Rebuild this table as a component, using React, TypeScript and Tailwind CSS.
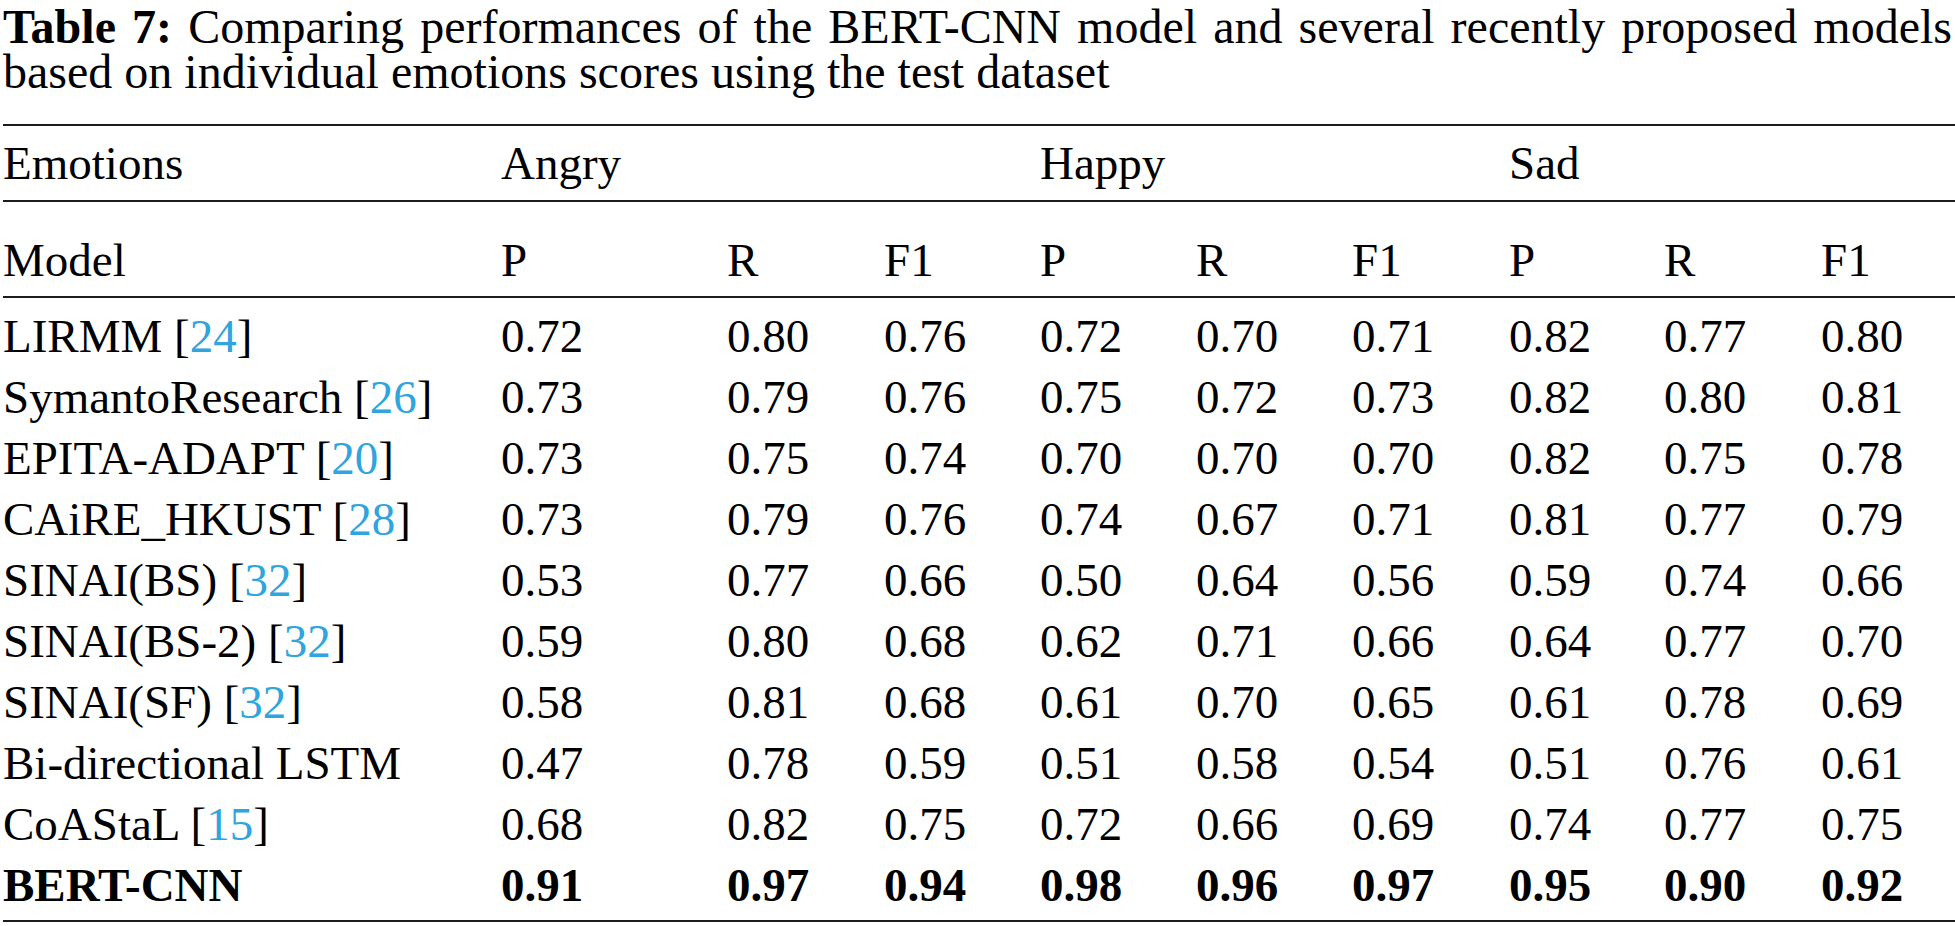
const cols =
  'grid grid-cols-[498px_226px_157px_156px_156px_156px_157px_155px_157px_1fr]';

interface ModelRow {
  name: string;
  ref?: string;
  scores: string[];
  bold?: boolean;
}

const rows: ModelRow[] = [
  { name: 'LIRMM', ref: '24', scores: ['0.72', '0.80', '0.76', '0.72', '0.70', '0.71', '0.82', '0.77', '0.80'] },
  { name: 'SymantoResearch', ref: '26', scores: ['0.73', '0.79', '0.76', '0.75', '0.72', '0.73', '0.82', '0.80', '0.81'] },
  { name: 'EPITA-ADAPT', ref: '20', scores: ['0.73', '0.75', '0.74', '0.70', '0.70', '0.70', '0.82', '0.75', '0.78'] },
  { name: 'CAiRE_HKUST', ref: '28', scores: ['0.73', '0.79', '0.76', '0.74', '0.67', '0.71', '0.81', '0.77', '0.79'] },
  { name: 'SINAI(BS)', ref: '32', scores: ['0.53', '0.77', '0.66', '0.50', '0.64', '0.56', '0.59', '0.74', '0.66'] },
  { name: 'SINAI(BS-2)', ref: '32', scores: ['0.59', '0.80', '0.68', '0.62', '0.71', '0.66', '0.64', '0.77', '0.70'] },
  { name: 'SINAI(SF)', ref: '32', scores: ['0.58', '0.81', '0.68', '0.61', '0.70', '0.65', '0.61', '0.78', '0.69'] },
  { name: 'Bi-directional LSTM', scores: ['0.47', '0.78', '0.59', '0.51', '0.58', '0.54', '0.51', '0.76', '0.61'] },
  { name: 'CoAStaL', ref: '15', scores: ['0.68', '0.82', '0.75', '0.72', '0.66', '0.69', '0.74', '0.77', '0.75'] },
  { name: 'BERT-CNN', bold: true, scores: ['0.91', '0.97', '0.94', '0.98', '0.96', '0.97', '0.95', '0.90', '0.92'] },
];

function Rule() {
  return <div className="h-[2px] bg-[#1c1c1c]" />;
}

export default function App() {
  return (
    <div className="w-[1955px] h-[926px] bg-white text-black pl-[3px] font-['Liberation_Serif',serif]">
      {/* Caption */}
      <div className="pt-[4px] pr-[3px] text-[48px] leading-[45px]">
        <div className="text-justify [text-align-last:justify] whitespace-nowrap">
          <span className="font-bold">Table 7:</span> Comparing performances of the BERT-CNN model and several recently proposed models
        </div>
        <div>based on individual emotions scores using the test dataset</div>
      </div>

      <div className="mt-[30px] text-[47px]">
        <Rule />
        <div className={`${cols} h-[74px] leading-[74px]`}>
          <div>Emotions</div>
          <div className="col-span-3">Angry</div>
          <div className="col-span-3">Happy</div>
          <div className="col-span-3">Sad</div>
        </div>
        <Rule />
        <div className={`${cols} pt-[35px] pb-[13px] leading-[46px]`}>
          <div>Model</div>
          {['P', 'R', 'F1', 'P', 'R', 'F1', 'P', 'R', 'F1'].map((h, i) => (
            <div key={i}>{h}</div>
          ))}
        </div>
        <Rule />
        <div className="pt-[8px] pb-[4px]">
          {rows.map((r) => (
            <div key={r.name} className={`${cols} leading-[61px] ${r.bold ? 'font-bold' : ''}`}>
              <div className="whitespace-nowrap">
                {r.name}
                {r.ref && (
                  <>
                    {' '}[<span className="text-[#2fa4de]">{r.ref}</span>]
                  </>
                )}
              </div>
              {r.scores.map((s, i) => (
                <div key={i}>{s}</div>
              ))}
            </div>
          ))}
        </div>
        <Rule />
      </div>
    </div>
  );
}
